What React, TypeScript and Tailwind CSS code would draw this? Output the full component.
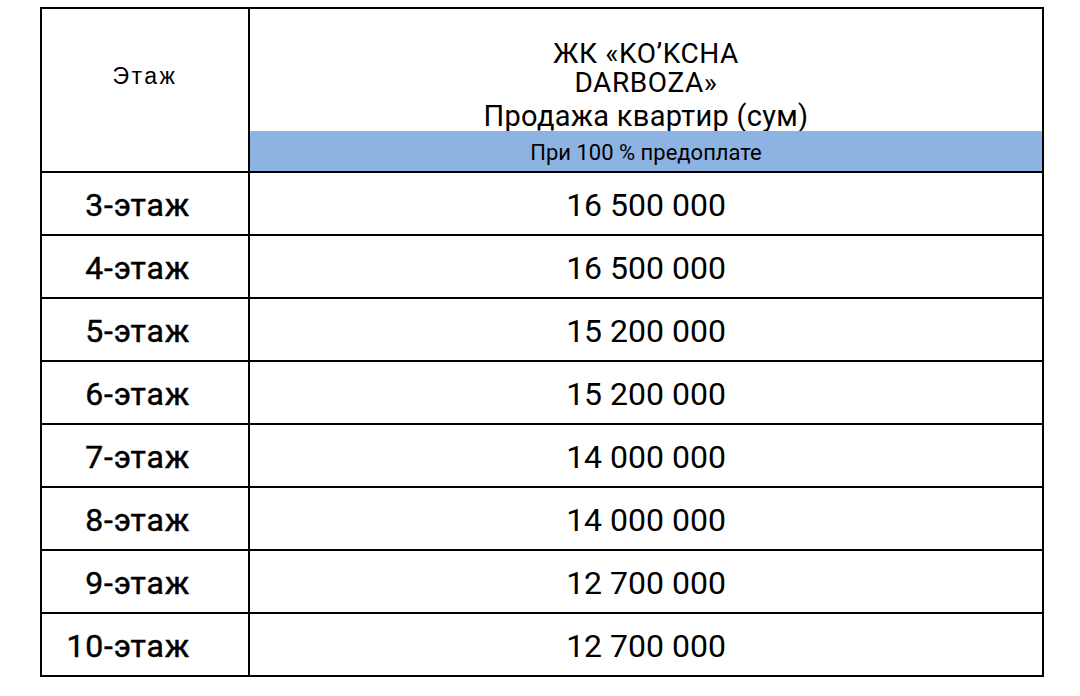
const rows = [
  ["3-этаж", "16 500 000"],
  ["4-этаж", "16 500 000"],
  ["5-этаж", "15 200 000"],
  ["6-этаж", "15 200 000"],
  ["7-этаж", "14 000 000"],
  ["8-этаж", "14 000 000"],
  ["9-этаж", "12 700 000"],
  ["10-этаж", "12 700 000"],
]

function App() {
  return (
    <div className="w-[1080px] h-[696px] bg-white pt-[7px] pl-[40px] text-black font-['Roboto',sans-serif]">
      <div className="w-[1004px] border-2 border-black">
        {/* header */}
        <div className="flex h-[162px]">
          <div className="w-[206px] shrink-0 flex justify-center pt-[56px]">
            <span className="font-['Liberation_Sans',Arial,sans-serif] text-[23px] leading-none tracking-[2.5px]">Этаж</span>
          </div>
          <div className="flex-1 border-l-2 border-black flex flex-col">
            <div className="flex-1 flex flex-col items-center pt-[30px]">
              <div className="text-[28px] leading-[29px] text-center tracking-[0.6px]">
                ЖК «KO’KCHA
                <br />
                DARBOZA»
              </div>
              <div className="mt-[4px] text-[29px] leading-[30px] tracking-[0.3px]">
                Продажа квартир (сум)
              </div>
            </div>
            <div className="h-[40px] bg-[#8db3e2] flex items-center justify-center text-[22px] pt-[2px]">
              При 100 % предоплате
            </div>
          </div>
        </div>
        {/* rows */}
        {rows.map(([floor, price]) => (
          <div key={floor} className="flex h-[63px] border-t-2 border-black">
            <div className="w-[206px] shrink-0 flex items-center justify-end pr-[58px] pt-[3px] text-[32px] tracking-[0.8px] [-webkit-text-stroke:0.45px_black]">
              {floor}
            </div>
            <div className="flex-1 border-l-2 border-black flex items-center justify-center pt-[3px] text-[32px]">
              {price}
            </div>
          </div>
        ))}
      </div>
    </div>
  )
}

export default App
